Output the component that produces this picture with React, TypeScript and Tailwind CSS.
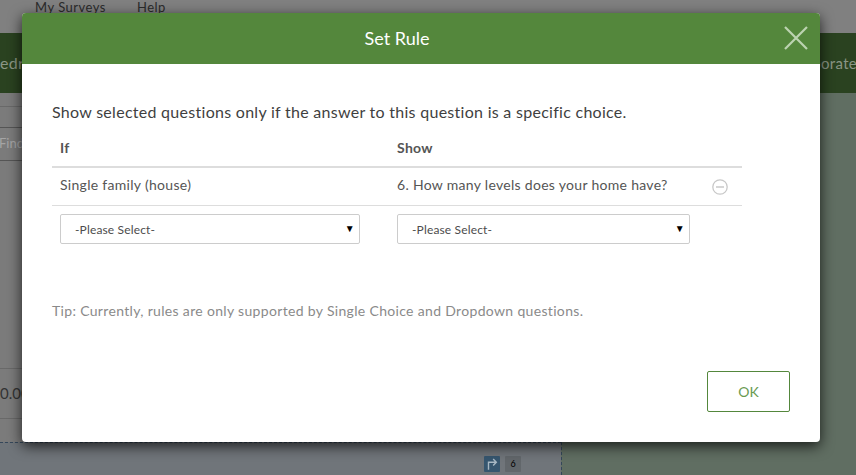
import React from "react";

const font = "font-['Lato','Noto_Sans',sans-serif]";

const Select = ({ className }: { className: string }) => (
  <div className={`relative ${className}`}>
    <select className="h-[30px] w-full appearance-none rounded-[2px] border border-[#cccccc] bg-white pl-[14px] pt-[2px] text-[12px] tracking-[0.15px] text-[#4c4c4c]">
      <option>-Please Select-</option>
    </select>
    <span className="pointer-events-none absolute right-[5px] top-[8px] text-[10px] leading-[12px] text-black">▼</span>
  </div>
);

const App = () => {
  return (
    <div className={`relative h-[475px] w-[856px] overflow-hidden bg-[#606e62] ${font}`}>
      {/* page behind the overlay */}
      <div className="flex h-[33px] items-start gap-[31px] bg-[#808080] pl-[35px] text-[13px] leading-[15px] tracking-[0.5px] text-[#2b2b2b]">
        <span>My Surveys</span>
        <span>Help</span>
      </div>
      <div className="flex h-[60px] items-center justify-between bg-[#2a4220] text-[15px] tracking-[0.3px] text-[#8a9685]">
        <span className="text-[16px]">edr</span>
        <span className="-mr-[1px]">Collaborate</span>
      </div>
      <div className="flex h-[382px]">
        <div className="flex w-[562px] flex-col border-r border-dashed border-[#35475a]">
          <div className="h-[349px] bg-[#7b7b7b]">
            <div className="mt-[13px] h-[21px] border-t border-[#696969]" />
            <div className="flex h-[34px] items-center border-y border-[#555555] text-[13px] text-[#a5a5a5]">
              <span className="-ml-[1px]">Find</span>
            </div>
            <div className="mt-[207px] flex h-[51px] items-center border-y border-[#696969] text-[15px] text-[#333333]">0.00</div>
          </div>
          <div className="flex flex-1 items-start justify-end gap-[5px] border-t border-dashed border-[#35475a] bg-[#70757a] pr-[40px] pt-[13px]">
            <span className="flex h-[16px] w-[16px] items-center justify-center rounded-[1px] bg-[#36566f]">
              <svg width="14" height="14" viewBox="0 0 12 12" fill="none" stroke="#a8b8c4" strokeWidth="1.200">
                <path d="M3 11V4.500h6.500M7 1.800l2.700 2.700L7 7.200" />
              </svg>
            </span>
            <span className="flex h-[16px] w-[16px] items-center justify-center rounded-[1px] bg-[#62676b] text-[9px] text-black">6</span>
          </div>
        </div>
      </div>

      {/* modal */}
      <div className="absolute left-[22px] top-[13px] flex h-[429px] w-[798px] flex-col overflow-hidden rounded-[4px] bg-white shadow-[0_4px_14px_rgba(0,0,0,0.75)]">
        <div className="relative flex h-[51px] items-center justify-center bg-[#54873c] pr-[48px] text-[18px] text-white">
          Set Rule
          <svg className="absolute right-[12px] top-[13px]" width="24" height="24" viewBox="0 0 24 24" fill="none" stroke="#bcd3b1" strokeWidth="2.200">
            <path d="M1 1l22 22M23 1L1 23" />
          </svg>
        </div>
        <div className="flex flex-1 flex-col px-[30px]">
          <p className="mt-[38px] text-[16px] leading-[20px] tracking-[0.28px] text-[#3f3f3f]">
            Show selected questions only if the answer to this question is a specific choice.
          </p>
          <div className="mt-[6px] w-[690px] text-[14px] tracking-[0.3px] text-[#555555]">
            <div className="grid h-[40px] grid-cols-[337px_317px_36px] items-center border-b-2 border-[#dddddd] font-bold">
              <span className="pl-[8px]">If</span>
              <span className="pl-[8px]">Show</span>
            </div>
            <div className="grid h-[38px] grid-cols-[337px_317px_36px] items-center border-b border-[#dddddd] pb-[5px]">
              <span className="pl-[8px]">Single family (house)</span>
              <span className="pl-[8px]">6. How many levels does your home have?</span>
              <svg className="ml-[6px] mt-[5px]" width="16" height="16" viewBox="0 0 16 16" fill="none" stroke="#c8c8c8" strokeWidth="1.300">
                <circle cx="8" cy="8" r="7.200" />
                <path d="M4 8h8" strokeWidth="1.600" />
              </svg>
            </div>
            <div className="grid grid-cols-[337px_317px_36px] pt-[8px]">
              <Select className="ml-[8px] w-[300px]" />
              <Select className="ml-[8px] w-[293px]" />
            </div>
          </div>
          <p className="mt-[58px] text-[14px] leading-[18px] tracking-[0.33px] text-[#8a8a8a]">
            Tip: Currently, rules are only supported by Single Choice and Dropdown questions.
          </p>
          <div className="mt-[51px] flex justify-end">
            <button className="h-[41px] w-[83px] rounded-[2px] border border-[#54873c] bg-white text-[14px] text-[#6a9a50]">OK</button>
          </div>
        </div>
      </div>
    </div>
  );
};

export default App;
